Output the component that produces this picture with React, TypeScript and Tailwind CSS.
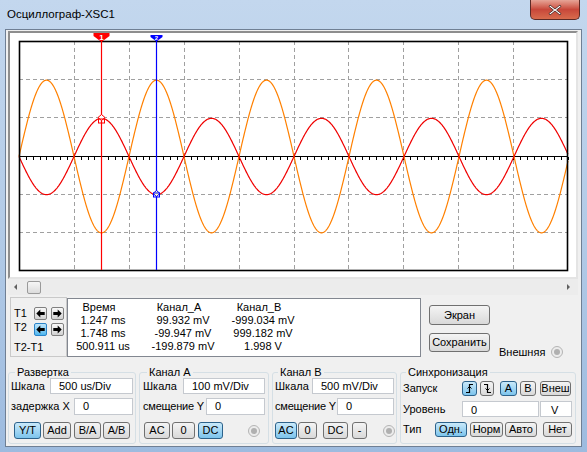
import React from "react";

const FONT = "font-['Liberation_Sans',Arial,sans-serif]";

function Btn({
  children,
  w,
  h = 17,
  active = false,
  className = "",
}: {
  children: React.ReactNode;
  w: number;
  h?: number;
  active?: boolean;
  className?: string;
}) {
  return (
    <div
      style={{ width: w, height: h }}
      className={`flex shrink-0 items-center justify-center rounded-[3px] border text-[11px] leading-none text-black ${
        active
          ? "border-[#2c628b] bg-linear-to-b from-[#c9e9fa] to-[#7cc4ec]"
          : "border-[#707070] bg-linear-to-b from-[#f4f4f4] to-[#d9d9d9]"
      } ${className}`}
    >
      {children}
    </div>
  );
}

function Field({ w, h = 16, value, className = "" }: { w: number; h?: number; value: string; className?: string }) {
  return (
    <div
      style={{ width: w, height: h }}
      className={`flex shrink-0 items-center border border-[#c5c9cf] bg-white pl-[8px] text-[11px] leading-none text-black ${className}`}
    >
      {value}
    </div>
  );
}

function Radio({ className = "" }: { className?: string }) {
  return (
    <div className={`flex h-[12px] w-[12px] items-center justify-center rounded-full border border-[#b4b4b4] bg-[#ececec] ${className}`}>
      <div className="h-[6px] w-[6px] rounded-full bg-[#b0b0b0]" />
    </div>
  );
}

function ArrowBtn({ dir, hot = false }: { dir: "l" | "r"; hot?: boolean }) {
  return (
    <div
      className={`flex h-[13px] w-[13px] items-center justify-center rounded-[2px] border ${
        hot ? "border-[#2a84c9] bg-linear-to-b from-[#bfe6fb] to-[#4cb6ee]" : "border-[#808080] bg-linear-to-b from-[#f8f8f8] to-[#d2d2d2]"
      }`}
    >
      <svg width="9" height="9" viewBox="0 0 9 9">
        <path
          d={dir === "l" ? "M0.3 4.5 L4.3 0.5 V3 H8.7 V6 H4.3 V8.5 Z" : "M8.7 4.5 L4.7 0.5 V3 H0.3 V6 H4.7 V8.5 Z"}
          fill="#000"
        />
      </svg>
    </div>
  );
}

function Plot() {
  const x0 = 19;
  const x1 = 568;
  const y0 = 41;
  const y1 = 270;
  const dx = (x1 - x0) / 10;
  const dy = (y1 - y0) / 6;
  const yc = Math.round(y0 + 3 * dy) + 0.5;

  const wave = (amp: number) => {
    const p: string[] = [];
    for (let x = x0; x <= x1; x += 0.5) {
      p.push(`${x},${(yc - amp * Math.sin((2 * Math.PI * (x - x0)) / 110)).toFixed(2)}`);
    }
    return p.join(" ");
  };

  const vlines = Array.from({ length: 9 }, (_, i) => Math.round(x0 + (i + 1) * dx) + 0.5);
  const hlines = [1, 2, 4, 5].map((k) => Math.round(y0 + k * dy) + 0.5);
  const ticks = Array.from({ length: 81 }, (_, i) => Math.round(x0 + (i * dx) / 8) + 0.5);

  return (
    <svg width="566" height="244" viewBox="10 33 566 244" className="block">
      <g stroke="#a0a0a0" strokeWidth="1" strokeDasharray="4 3" shapeRendering="crispEdges">
        {vlines.map((x) => (
          <line key={x} x1={x} y1={y0} x2={x} y2={y1} />
        ))}
        {hlines.map((y) => (
          <line key={y} x1={x0} y1={y} x2={x1} y2={y} />
        ))}
      </g>
      <g stroke="#000" strokeWidth="1" shapeRendering="crispEdges">
        <line x1={x0} y1={yc} x2={x1} y2={yc} strokeWidth="1.6" />
        {ticks.map((x) => (
          <line key={x} x1={x} y1={yc} x2={x} y2={yc + 3} />
        ))}
      </g>
      <polyline points={wave(2 * dy)} fill="none" stroke="#ff8000" strokeWidth="1.2" />
      <polyline points={wave(-dy)} fill="none" stroke="#f00000" strokeWidth="1.2" />
      <rect x={x0 + 0.5} y={y0 + 0.5} width={x1 - x0 - 1} height={y1 - y0} fill="none" stroke="#000" strokeWidth="1.6" />

      {/* cursor 1 */}
      <line x1="101.5" y1="36" x2="101.5" y2={y1} stroke="#ff0000" strokeWidth="1.2" />
      <polygon points="93.5,33 109.5,33 109.5,36 101.5,42 93.5,36" fill="#ff0000" />
      <text x="101.5" y="39.5" fill="#fff" fontSize="8" fontWeight="bold" textAnchor="middle" fontFamily="Liberation Sans, Arial, sans-serif">
        1
      </text>
      <polygon points="101.5,114.5 105,117.5 101.5,120.5 98,117.5" fill="#fff" stroke="#ff0000" strokeWidth="1" />
      <rect x="98.5" y="119" width="6" height="4" fill="none" stroke="#ff0000" strokeWidth="1" />

      {/* cursor 2 */}
      <line x1="156.5" y1="37" x2="156.5" y2={y1} stroke="#0000ff" strokeWidth="1.2" />
      <polygon points="150.5,35 162.5,35 162.5,37 156.5,41.5 150.5,37" fill="#0000ff" />
      <text x="156.5" y="40" fill="#fff" fontSize="6" fontWeight="bold" textAnchor="middle" fontFamily="Liberation Sans, Arial, sans-serif">
        2
      </text>
      <polygon points="156.5,190.5 160,193.5 156.5,196.5 153,193.5" fill="#ffffc0" stroke="#0000ff" strokeWidth="1" />
      <rect x="153.5" y="193" width="6" height="4" fill="none" stroke="#0000ff" strokeWidth="1" />
    </svg>
  );
}

function Group({ title, w, legendMl, children }: { title: string; w: number; legendMl: number; children: React.ReactNode }) {
  return (
    <fieldset style={{ width: w }} className="flex h-[78px] shrink-0 flex-col rounded-[3px] border border-[#d5dfe5]">
      <legend style={{ marginLeft: legendMl }} className="px-[2px] text-[11px] leading-[12px] text-black">
        {title}
      </legend>
      {children}
    </fieldset>
  );
}

export default function App() {
  return (
    <div className={`flex h-[452px] w-[587px] flex-col overflow-hidden bg-linear-to-b from-[#c3d7ee] via-[#b3cbe7] to-[#9dbbdf] ${FONT}`}>
      {/* title bar */}
      <div className="flex h-[29px] shrink-0 items-start">
        <span className="ml-[7px] mt-[9px] text-[11.5px] leading-none text-black">Осциллограф-XSC1</span>
        <div className="ml-auto mr-[7px] flex h-[20px] w-[50px] items-center justify-center rounded-b-[5px] border border-t-0 border-[#5c2a26] bg-linear-to-b from-[#e6a497] via-[#c8473a] to-[#d86b4d]">
          <svg width="14" height="12" viewBox="0 0 14 12">
            <path d="M2 1 L7 5 L12 1 L13 2.5 L8.6 6 L13 9.5 L12 11 L7 7 L2 11 L1 9.5 L5.4 6 L1 2.5 Z" fill="#fff" stroke="#3c2220" strokeWidth="0.8" />
          </svg>
        </div>
      </div>

      <div className="flex min-h-0 flex-1 pb-[5px] pl-[5px] pr-[5px]">
        <div className="flex flex-1 flex-col border border-[#6f7f94] bg-[#f0f0f0] text-[11px] leading-none text-black">
          {/* screen */}
          <div className="ml-[2px] mr-[3px] mt-[1px] h-[248px] border-2 border-b-[#e4e4e4] border-l-[#8e8e8e] border-r-[#e4e4e4] border-t-[#8e8e8e] bg-white">
            <Plot />
          </div>

          {/* scrollbar */}
          <div className="ml-[2px] mr-[3px] flex h-[16px] items-center bg-[#ececec]">
            <svg width="20" height="16" viewBox="0 0 20 16">
              <path d="M6 8 L9 5 V11 Z" fill="#606060" />
            </svg>
            <div className="ml-[-1px] h-[13px] w-[14px] rounded-[2px] border border-[#9a9a9a] bg-linear-to-b from-[#f6f6f6] to-[#dcdcdc]" />
            <svg width="20" height="16" viewBox="0 0 20 16" className="ml-auto">
              <path d="M12 8 L9 5 V11 Z" fill="#606060" />
            </svg>
          </div>

          {/* cursors / readout row */}
          <div className="mt-[1px] flex h-[63px]">
            <div className="ml-[4px] mt-[1px] flex h-[60px] w-[57px] flex-col border border-[#c9c9c9] pl-[3px]">
              <div className="mt-[9px] flex h-[13px] items-center">
                <span className="w-[20px]">T1</span>
                <ArrowBtn dir="l" />
                <span className="w-[4px]" />
                <ArrowBtn dir="r" />
              </div>
              <div className="mt-[3px] flex h-[13px] items-center">
                <span className="mt-[-4px] w-[20px]">T2</span>
                <ArrowBtn dir="l" hot />
                <span className="w-[4px]" />
                <ArrowBtn dir="r" />
              </div>
              <div className="mt-[6px]">T2-T1</div>
            </div>
            <div className="ml-0 mt-[2px] flex h-[59px] w-[354px] flex-col border border-[#828790] bg-white pt-[2px]">
              {[
                ["Время", "Канал_А", "Канал_В"],
                ["1.247 ms", "99.932 mV", "-999.034 mV"],
                ["1.748 ms", "-99.947 mV", "999.182 mV"],
                ["500.911 us", "-199.879 mV", "1.998 V"],
              ].map((r, i) => (
                <div key={i} className="flex h-[13px] items-center">
                  <span className={`w-[66px] whitespace-nowrap text-center ${i === 0 ? "ml-[-2px]" : "ml-[2px]"}`}>{r[0]}</span>
                  <span className={`ml-[14px] w-[66px] whitespace-nowrap text-center ${i === 0 ? "ml-[10px]" : ""}`}>{r[1]}</span>
                  <span className="ml-[14px] w-[66px] whitespace-nowrap text-center">{r[2]}</span>
                </div>
              ))}
            </div>
            <div className="ml-[8px] flex flex-col">
              <Btn w={61} h={20} className="mt-[9px]">
                Экран
              </Btn>
              <Btn w={61} h={19} className="mt-[8px]">
                Сохранить
              </Btn>
            </div>
            <div className="ml-[9px] mt-[50px] flex h-[12px] items-center">
              <span>Внешняя</span>
              <Radio className="ml-[6px]" />
            </div>
          </div>

          {/* controls */}
          <div className="ml-[2px] mt-[7px] flex gap-[3px]">
            <Group title="Развертка" w={128} legendMl={6}>
              <div className="flex h-[16px] items-center pl-[2px]">
                <span className="w-[39px]">Шкала</span>
                <Field w={83} value="500 us/Div" />
              </div>
              <div className="mt-[4px] flex h-[17px] items-center pl-[2px]">
                <span className="w-[63px] whitespace-nowrap">задержка X</span>
                <Field w={59} h={17} value="0" />
              </div>
              <div className="mt-[7px] flex items-center pl-[5px]">
                <Btn w={27} active>
                  Y/T
                </Btn>
                <Btn w={28} className="ml-[2px]">
                  Add
                </Btn>
                <Btn w={27} className="ml-[3px]">
                  B/A
                </Btn>
                <Btn w={27} className="ml-[2px]">
                  A/B
                </Btn>
              </div>
            </Group>

            <Group title="Канал А" w={130} legendMl={7}>
              <div className="flex h-[16px] items-center pl-[3px]">
                <span className="w-[40px]">Шкала</span>
                <Field w={82} value="100 mV/Div" />
              </div>
              <div className="mt-[4px] flex h-[17px] items-center pl-[3px]">
                <span className="w-[63px] whitespace-nowrap tracking-[-0.2px]">смещение Y</span>
                <Field w={59} h={17} value="0" />
              </div>
              <div className="mt-[7px] flex items-center pl-[4px]">
                <Btn w={26}>AC</Btn>
                <Btn w={23} className="ml-[2px]">
                  0
                </Btn>
                <Btn w={25} className="ml-[3px]" active>
                  DC
                </Btn>
                <Radio className="ml-[25px]" />
              </div>
            </Group>

            <Group title="Канал B" w={125} legendMl={5}>
              <div className="flex h-[16px] items-center pl-[2px]">
                <span className="w-[37px]">Шкала</span>
                <Field w={82} value="500 mV/Div" />
              </div>
              <div className="mt-[4px] flex h-[17px] items-center pl-[2px]">
                <span className="w-[62px] whitespace-nowrap tracking-[-0.2px]">смещение Y</span>
                <Field w={57} h={17} value="0" />
              </div>
              <div className="mt-[7px] flex items-center pl-[2px]">
                <Btn w={22} active>
                  AC
                </Btn>
                <Btn w={19} className="ml-[1px]">
                  0
                </Btn>
                <Btn w={25} className="ml-[6px]">
                  DC
                </Btn>
                <Btn w={15} className="ml-[4px]">
                  -
                </Btn>
                <Radio className="ml-[16px]" />
              </div>
            </Group>

            <Group title="Синхронизация" w={176} legendMl={5}>
              <div className="mt-[3px] flex h-[15px] items-center pl-[2px]">
                <span className="w-[59px]">Запуск</span>
                <Btn w={15} h={15} active>
                  <svg width="9" height="9" viewBox="0 0 9 9">
                    <path d="M1 8.5 H4.5 V0.5 H8" fill="none" stroke="#000" strokeWidth="1.2" />
                    <path d="M2.5 4.5 L4.5 2.5 L6.5 4.5" fill="none" stroke="#000" strokeWidth="1" />
                  </svg>
                </Btn>
                <Btn w={14} h={15} className="ml-[3px]">
                  <svg width="9" height="9" viewBox="0 0 9 9">
                    <path d="M1 0.5 H4.5 V8.5 H8" fill="none" stroke="#000" strokeWidth="1.2" />
                    <path d="M2.5 4.5 L4.5 6.5 L6.5 4.5" fill="none" stroke="#000" strokeWidth="1" />
                  </svg>
                </Btn>
                <Btn w={17} h={15} className="ml-[6px]" active>
                  A
                </Btn>
                <Btn w={16} h={15} className="ml-[3px]">
                  B
                </Btn>
                <Btn w={31} h={15} className="ml-[4px]">
                  Внеш
                </Btn>
              </div>
              <div className="mt-[5px] flex h-[16px] items-center pl-[2px]">
                <span className="w-[59px]">Уровень</span>
                <Field w={77} value="0" className="pt-[3px]" />
                <Field w={32} value="V" className="ml-[1px] pl-[10px] pt-[3px]" />
              </div>
              <div className="mt-[5px] flex h-[15px] items-center pl-[2px]">
                <span className="w-[32px]">Тип</span>
                <Btn w={32} h={15} active>
                  Одн.
                </Btn>
                <Btn w={33} h={15} className="ml-[3px]">
                  Норм
                </Btn>
                <Btn w={32} h={15} className="ml-[2px]">
                  Авто
                </Btn>
                <Btn w={29} h={15} className="ml-[6px]">
                  Нет
                </Btn>
              </div>
            </Group>
          </div>
        </div>
      </div>
    </div>
  );
}
